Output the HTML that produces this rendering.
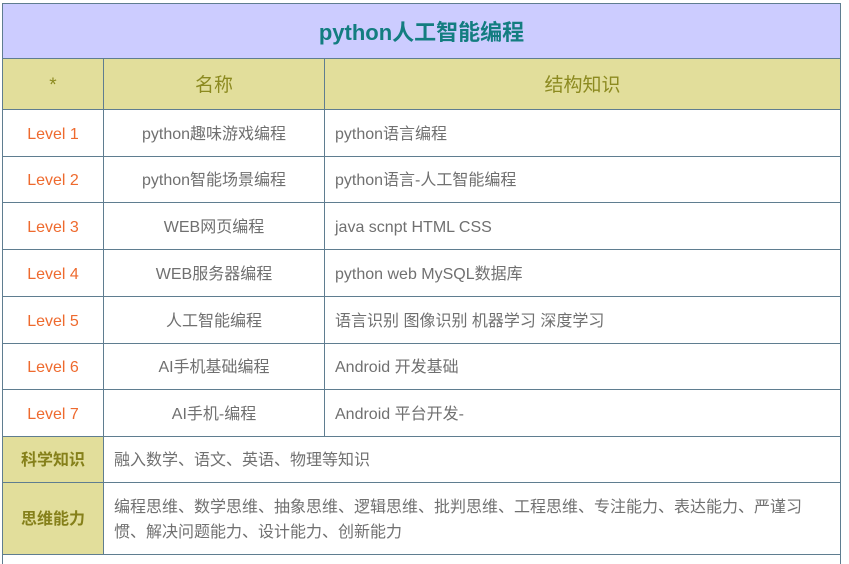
<!DOCTYPE html>
<html><head><meta charset="utf-8"><style>
html,body{margin:0;padding:0;background:#fff;width:849px;height:561px;overflow:hidden;font-family:"Liberation Sans","Noto Sans CJK SC",sans-serif}
.c{position:absolute;box-sizing:border-box;border:1px solid #5f7d90;display:flex;align-items:center;font-size:16px;color:#707070;line-height:22px;padding-top:3px}
.c span{display:block;line-height:22px;height:22px}
.ctr{justify-content:center;text-align:center}
.l{padding-left:10px}
.lv{color:#ee6a2e}
.hd{background:#e2de9b;color:#8c8a20;font-size:19px}
.sk{background:#e2de9b;color:#85801a;font-weight:bold;font-size:16px}
</style></head><body>
<div class="c ctr" style="left:2px;top:3px;width:839px;height:56px;background:#ccccff;color:#137d80;font-weight:bold;font-size:22px"><span style="height:28px;line-height:28px">python人工智能编程</span></div>
<div class="c ctr hd" style="left:2px;top:58px;width:102px;height:52px"><span>*</span></div>
<div class="c ctr hd" style="left:103px;top:58px;width:222px;height:52px"><span>名称</span></div>
<div class="c ctr hd" style="left:324px;top:58px;width:517px;height:52px"><span>结构知识</span></div>

<div class="c ctr lv" style="left:2px;top:109px;width:102px;height:48px"><span>Level 1</span></div>
<div class="c ctr" style="left:103px;top:109px;width:222px;height:48px"><span>python趣味游戏编程</span></div>
<div class="c l" style="left:324px;top:109px;width:517px;height:48px"><span>python语言编程</span></div>

<div class="c ctr lv" style="left:2px;top:156px;width:102px;height:47px"><span>Level 2</span></div>
<div class="c ctr" style="left:103px;top:156px;width:222px;height:47px"><span>python智能场景编程</span></div>
<div class="c l" style="left:324px;top:156px;width:517px;height:47px"><span>python语言-人工智能编程</span></div>

<div class="c ctr lv" style="left:2px;top:202px;width:102px;height:48px"><span>Level 3</span></div>
<div class="c ctr" style="left:103px;top:202px;width:222px;height:48px"><span>WEB网页编程</span></div>
<div class="c l" style="left:324px;top:202px;width:517px;height:48px"><span>java scnpt HTML CSS</span></div>

<div class="c ctr lv" style="left:2px;top:249px;width:102px;height:48px"><span>Level 4</span></div>
<div class="c ctr" style="left:103px;top:249px;width:222px;height:48px"><span>WEB服务器编程</span></div>
<div class="c l" style="left:324px;top:249px;width:517px;height:48px"><span>python web MySQL数据库</span></div>

<div class="c ctr lv" style="left:2px;top:296px;width:102px;height:48px"><span>Level 5</span></div>
<div class="c ctr" style="left:103px;top:296px;width:222px;height:48px"><span>人工智能编程</span></div>
<div class="c l" style="left:324px;top:296px;width:517px;height:48px"><span>语言识别 图像识别 机器学习 深度学习</span></div>

<div class="c ctr lv" style="left:2px;top:343px;width:102px;height:47px"><span>Level 6</span></div>
<div class="c ctr" style="left:103px;top:343px;width:222px;height:47px"><span>AI手机基础编程</span></div>
<div class="c l" style="left:324px;top:343px;width:517px;height:47px"><span>Android 开发基础</span></div>

<div class="c ctr lv" style="left:2px;top:389px;width:102px;height:48px"><span>Level 7</span></div>
<div class="c ctr" style="left:103px;top:389px;width:222px;height:48px"><span>AI手机-编程</span></div>
<div class="c l" style="left:324px;top:389px;width:517px;height:48px"><span>Android 平台开发-</span></div>

<div class="c ctr sk" style="left:2px;top:436px;width:102px;height:47px"><span>科学知识</span></div>
<div class="c l" style="left:103px;top:436px;width:738px;height:47px"><span>融入数学、语文、英语、物理等知识</span></div>

<div class="c ctr sk" style="left:2px;top:482px;width:102px;height:73px"><span>思维能力</span></div>
<div class="c l" style="left:103px;top:482px;width:738px;height:73px;padding-right:30px"><div style="line-height:25px">编程思维、数学思维、抽象思维、逻辑思维、批判思维、工程思维、专注能力、表达能力、严谨习惯、解决问题能力、设计能力、创新能力</div></div>
<div style="position:absolute;left:2px;top:554px;width:1px;height:10px;background:#5f7d90"></div>
<div style="position:absolute;left:840px;top:554px;width:1px;height:10px;background:#5f7d90"></div>
</body></html>
